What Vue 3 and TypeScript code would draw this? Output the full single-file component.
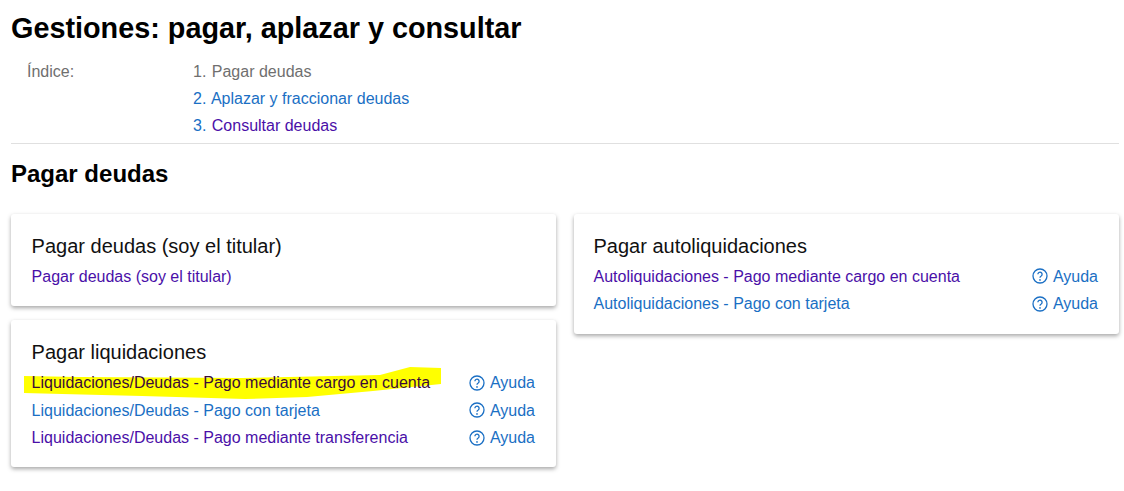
<script setup lang="ts">
interface Row { text: string; visited: boolean; help: boolean; mark?: boolean }
interface Card { title: string; rows: Row[] }

const index = [
  { n: '1.', text: 'Pagar deudas', kind: 'current' },
  { n: '2.', text: 'Aplazar y fraccionar deudas', kind: 'link' },
  { n: '3.', text: 'Consultar deudas', kind: 'visited' },
]

const leftCards: Card[] = [
  {
    title: 'Pagar deudas (soy el titular)',
    rows: [{ text: 'Pagar deudas (soy el titular)', visited: true, help: false }],
  },
  {
    title: 'Pagar liquidaciones',
    rows: [
      { text: 'Liquidaciones/Deudas - Pago mediante cargo en cuenta', visited: true, help: true, mark: true },
      { text: 'Liquidaciones/Deudas - Pago con tarjeta', visited: false, help: true },
      { text: 'Liquidaciones/Deudas - Pago mediante transferencia', visited: true, help: true },
    ],
  },
]

const rightCards: Card[] = [
  {
    title: 'Pagar autoliquidaciones',
    rows: [
      { text: 'Autoliquidaciones - Pago mediante cargo en cuenta', visited: true, help: true },
      { text: 'Autoliquidaciones - Pago con tarjeta', visited: false, help: true },
    ],
  },
]

const columns = [leftCards, rightCards]
</script>

<template>
  <div class="page">
    <h1>Gestiones: pagar, aplazar y consultar</h1>
    <div class="index">
      <div class="index-label">Índice:</div>
      <ol>
        <li v-for="i in index" :key="i.n" :class="i.kind">
          <span class="num">{{ i.n }}</span> <span>{{ i.text }}</span>
        </li>
      </ol>
    </div>
    <h2>Pagar deudas</h2>
    <div class="columns">
      <div v-for="(col, c) in columns" :key="c" class="column">
        <section v-for="card in col" :key="card.title" class="card">
          <h3>{{ card.title }}</h3>
          <div v-for="row in card.rows" :key="row.text" class="row">
            <svg v-if="row.mark" class="mark" viewBox="0 0 420 33" preserveAspectRatio="none" aria-hidden="true">
              <path d="M2 9 L58 10 L220 11 L358 8 L388 0 L419 1 L419 17 L351 24 L285 30 L223 32 L120 29 L40 27 L2 26 Z" fill="#ffff00" />
            </svg>
            <span class="link" :class="{ visited: row.visited, marked: row.mark }">{{ row.text }}</span>
            <span v-if="row.help" class="help">
              <svg viewBox="0 0 16 16" width="16" height="16" aria-hidden="true">
                <circle cx="8" cy="8" r="7" fill="none" stroke="#1a6fc4" stroke-width="1.3" />
                <path d="M5.9 6.3a2.1 2.1 0 1 1 3.3 1.7c-.8.5-1.2.9-1.2 1.8" fill="none" stroke="#1a6fc4" stroke-width="1.3" />
                <circle cx="8" cy="11.9" r=".85" fill="#1a6fc4" />
              </svg>
              Ayuda
            </span>
          </div>
        </section>
      </div>
    </div>
  </div>
</template>

<style>
html, body { margin: 0; background: #fff; }
</style>

<style scoped>
.page {
  box-sizing: border-box;
  width: 1124px;
  height: 491px;
  padding: 11px 5px 0 11px;
  font-family: "Liberation Sans", Arial, sans-serif;
  overflow: hidden;
}
h1 {
  margin: 0;
  font-size: 28.8px;
  line-height: 34px;
  font-weight: 700;
  color: #000;
}
.index {
  display: flex;
  padding: 13px 0 4px 16px;
  border-bottom: 1px solid #e0e0e0;
  font-size: 16px;
  line-height: 27px;
  color: #6f6f6f;
}
.index-label { width: 166px; }
ol { margin: 0; padding: 0; list-style: none; }
.num { color: #1a6fc4; margin-right: 1px; }
.current .num, .current { color: #6f6f6f; }
.link { color: #1a6fc4; }
li.link { color: #1a6fc4; }
li.visited { color: #4a0fa8; }
h2 {
  margin: 16px 0 0;
  font-size: 24px;
  line-height: 28px;
  font-weight: 700;
  color: #000;
}
.columns {
  display: flex;
  gap: 18px;
  margin-top: 26px;
}
.column {
  flex: 1 1 0;
  display: flex;
  flex-direction: column;
  gap: 14px;
}
.card {
  padding: 20px 21px 15.5px 20.6px;
  background: #fff;
  border-radius: 3px;
  box-shadow: 0 2px 4px rgba(0, 0, 0, 0.35);
}
.column:last-child .card { padding: 20px 21px 16px 19.5px; }
.column:last-child h3 { margin-bottom: 4.5px; }
h3 {
  margin: 0 0 5px;
  font-size: 20px;
  line-height: 24px;
  font-weight: 400;
  color: #111;
}
.row {
  position: relative;
  display: flex;
  justify-content: space-between;
  font-size: 16px;
  line-height: 27.5px;
}
.link.visited { color: #4a0fa8; }
.link.marked { position: relative; color: #3a0a3a; }
.mark {
  position: absolute;
  left: -10px;
  top: -2px;
  width: 420px;
  height: 33px;
}
.help {
  display: inline-flex;
  align-items: center;
  gap: 5px;
  color: #1a6fc4;
}
</style>
